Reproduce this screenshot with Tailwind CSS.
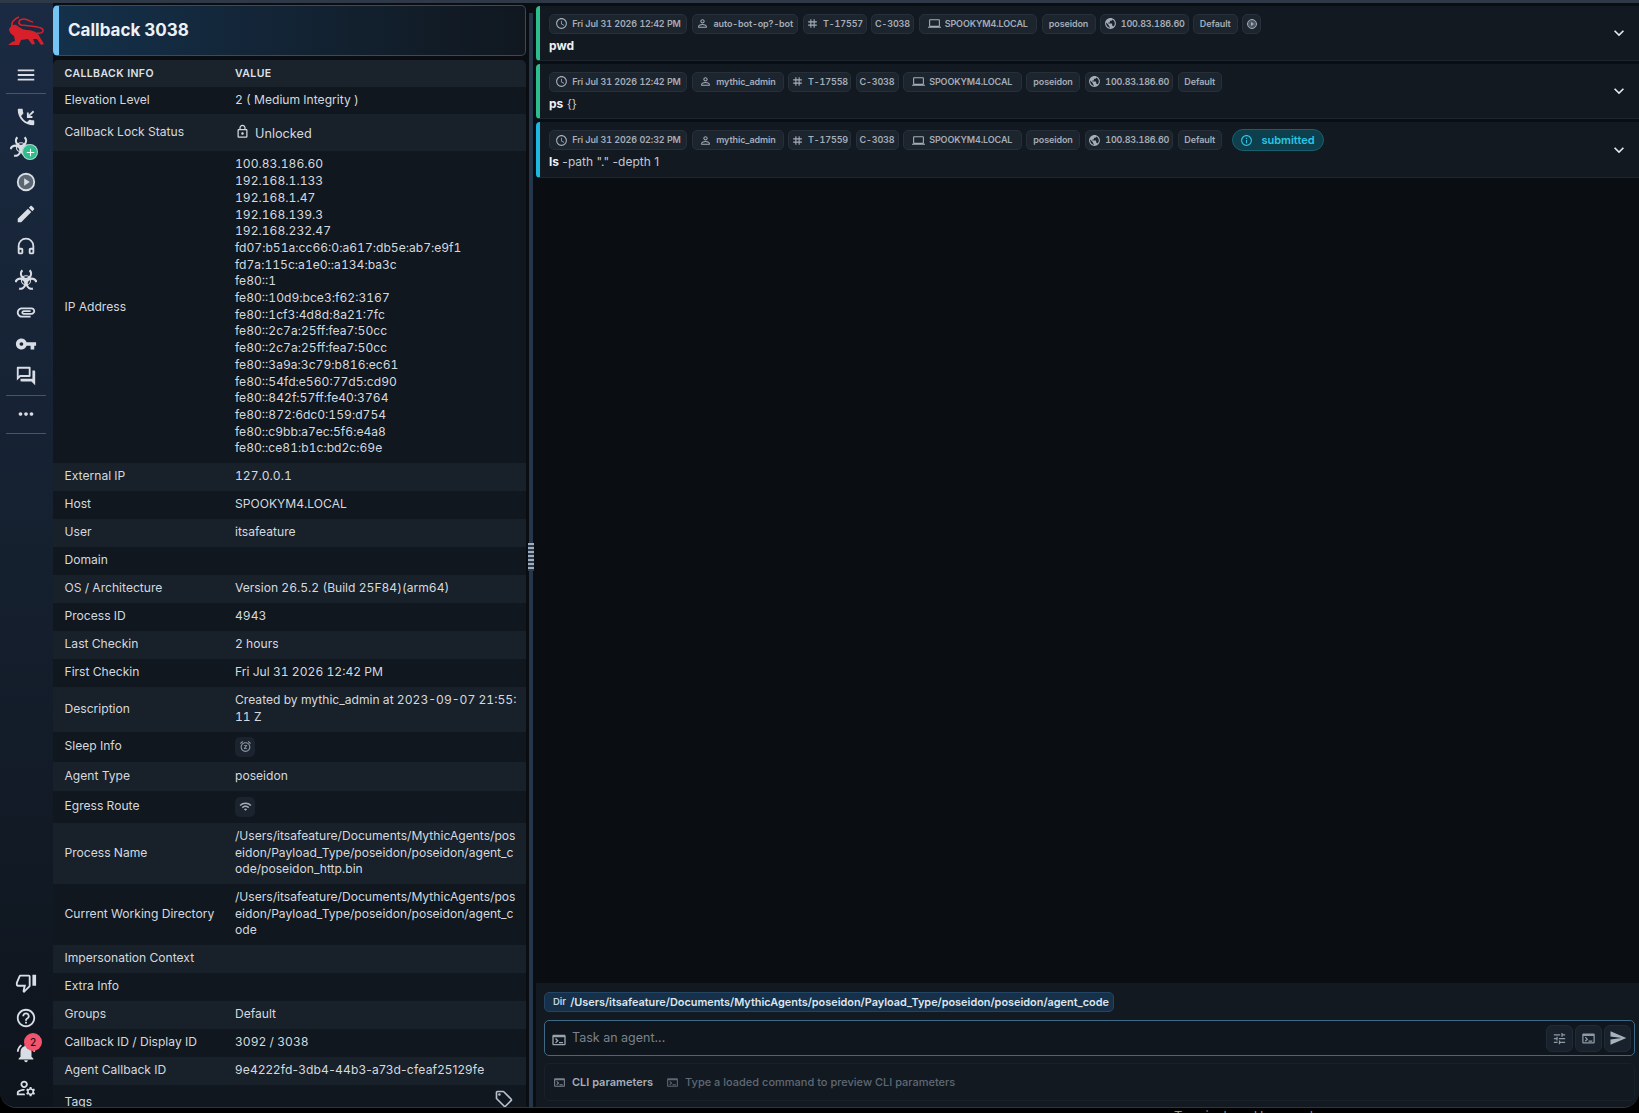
<!DOCTYPE html>
<html lang="en">
<head>
<meta charset="UTF-8">
<title>Callback 3038</title>
<script src="https://cdn.jsdelivr.net/npm/@tailwindcss/browser@4"></script>
</head>
<body class="bg-black">
<svg class="hidden">
  <symbol id="i-clock" viewBox="0 0 24 24"><path d="M11.99 2C6.47 2 2 6.48 2 12s4.47 10 9.99 10C17.52 22 22 17.52 22 12S17.52 2 11.99 2zM12 20c-4.42 0-8-3.58-8-8s3.58-8 8-8 8 3.58 8 8-3.58 8-8 8zm.5-13H11v6l5.25 3.15.75-1.23-4.5-2.67z"/></symbol>
  <symbol id="i-person" viewBox="0 0 24 24"><path d="M12 5.9c1.16 0 2.1.94 2.1 2.1s-.94 2.1-2.1 2.1S9.9 9.16 9.9 8s.94-2.1 2.1-2.1m0 9c2.97 0 6.1 1.46 6.1 2.1v1.1H5.9V17c0-.64 3.13-2.1 6.1-2.1M12 4C9.79 4 8 5.79 8 8s1.79 4 4 4 4-1.79 4-4-1.79-4-4-4zm0 9c-2.67 0-8 1.34-8 4v3h16v-3c0-2.66-5.33-4-8-4z"/></symbol>
  <symbol id="i-tag" viewBox="0 0 24 24"><path d="M20 10V8h-4V4h-2v4h-4V4H8v4H4v2h4v4H4v2h4v4h2v-4h4v4h2v-4h4v-2h-4v-4h4zm-6 4h-4v-4h4v4z"/></symbol>
  <symbol id="i-laptop" viewBox="0 0 24 24"><path d="M20 18c1.1 0 1.99-.9 1.99-2L22 6c0-1.1-.9-2-2-2H4c-1.1 0-2 .9-2 2v10c0 1.1.9 2 2 2H0v2h24v-2h-4zM4 6h16v10H4V6z"/></symbol>
  <symbol id="i-globe" viewBox="0 0 24 24"><path d="M12 2C6.48 2 2 6.48 2 12s4.48 10 10 10 10-4.48 10-10S17.52 2 12 2zm-1 17.93c-3.95-.49-7-3.85-7-7.93 0-.62.08-1.21.21-1.79L9 15v1c0 1.1.9 2 2 2v1.93zm6.9-2.54c-.26-.81-1-1.39-1.9-1.39h-1v-3c0-.55-.45-1-1-1H8v-2h2c.55 0 1-.45 1-1V7h2c1.1 0 2-.9 2-2v-.41c2.93 1.19 5 4.06 5 7.41 0 2.08-.8 3.97-2.1 5.39z"/></symbol>
  <symbol id="i-term" viewBox="0 0 24 24"><path d="M20 4H4c-1.1 0-2 .9-2 2v12c0 1.1.9 2 2 2h16c1.1 0 2-.9 2-2V6c0-1.1-.9-2-2-2zm0 14H4V8h16v10zm-2-1h-6v-2h6v2zM7.5 17l-1.41-1.41L8.67 13l-2.59-2.59L7.5 9l4 4-4 4z"/></symbol>
  <symbol id="i-chev" viewBox="0 0 24 24"><path d="M16.59 8.59 12 13.17 7.41 8.59 6 10l6 6 6-6z"/></symbol>
  <symbol id="i-bio" viewBox="0 0 24 24">
    <g fill="none" stroke="currentColor" stroke-width="2.400">
      <path d="M8 2.500A5.500 5.500 0 1 0 16 2.500"/>
      <path d="M8 2.500A5.500 5.500 0 1 0 16 2.500" transform="rotate(120 12 13.500)"/>
      <path d="M8 2.500A5.500 5.500 0 1 0 16 2.500" transform="rotate(240 12 13.500)"/>
      <circle cx="12" cy="13.500" r="5" stroke-width="1.100"/>
    </g>
    <circle cx="12" cy="13.500" r="1.700" fill="currentColor"/>
  </symbol>
</svg>

<div class="h-[1113px] w-[1639px] overflow-hidden relative" style="font-family:Inter,'Liberation Sans',sans-serif">
  <div class="h-[1108px] flex flex-col bg-[#0a0e13] rounded-b-[16px] border-b border-[#2c343e] overflow-hidden">
    <div class="h-[3px] shrink-0 bg-[#2e3846]"></div>
    <div class="flex-1 flex min-h-0">

      <!-- sidebar -->
      <div class="w-[53px] shrink-0 flex flex-col items-center pr-[1px] bg-gradient-to-b from-[#1a2a42] via-[#15202f] to-[#0e141c] text-[#d9dee5]">
        <svg class="mt-[10px] w-[40px] h-[36px]" viewBox="6 13 40 34" fill="#d8202b">
          <path d="M9 28C11 24 14 23 16 24C20 26 22 29 27 29C31 29 35 30 38 33L41 38L44 43L41 44L37 38L33 38L35 43L32 43.500L28 38L21 39L19 44L8 44L12 41L15 40L14 35C11 33 9 31 9 28Z"/>
          <path d="M37 32C43 33 45 29 41 27C36 25 28 25 21 24C17 22 19 18 24 18C28 18 30 21 33 21" fill="none" stroke="#d8202b" stroke-width="1.600"/>
          <path d="M12 26C11 21 14 18 19 16" fill="none" stroke="#d8202b" stroke-width="1.600"/>
        </svg>
        <svg class="mt-[15px] w-[22px] h-[22px]" viewBox="0 0 24 24" fill="currentColor"><path d="M3 18h18v-2H3v2zm0-5h18v-2H3v2zm0-7v2h18V6H3z"/></svg>
        <div class="mt-[7px] w-[40px] h-px bg-[#4a5563]"></div>
        <div class="mt-[7px] flex flex-col items-center w-full">
          <div class="h-[32.4px] flex items-center"><svg class="w-[22px] h-[22px]" viewBox="0 0 24 24" fill="currentColor"><path d="M20 15.500c-1.250 0-2.450-.2-3.570-.57-.35-.11-.74-.03-1.020.24l-2.200 2.200c-2.830-1.440-5.150-3.750-6.590-6.580l2.200-2.210c.28-.27.36-.66.25-1.010C8.700 6.450 8.500 5.250 8.500 4c0-.55-.45-1-1-1H4c-.55 0-1 .45-1 1 0 9.390 7.610 17 17 17 .55 0 1-.45 1-1v-3.500c0-.55-.45-1-1-1zM21 6.410 19.590 5 15 9.590V7h-2v6h6v-2h-2.590z"/></svg></div>
          <div class="h-[32.4px] flex items-center relative -ml-[10px]">
            <svg class="w-[22px] h-[22px] -mt-[7px]"><use href="#i-bio"/></svg>
            <div class="absolute left-[12px] top-[11px] w-[16px] h-[16px] rounded-full bg-[#2ebd8c] border border-[#e4e8ee]/70 flex items-center justify-center"><svg class="w-[13px] h-[13px]" viewBox="0 0 24 24" fill="#fff"><path d="M19 13h-6v6h-2v-6H5v-2h6V5h2v6h6v2z"/></svg></div>
          </div>
          <div class="h-[32.4px] flex items-center"><svg class="w-[22px] h-[22px]" viewBox="0 0 24 24"><circle cx="12" cy="12" r="9" fill="#5d6673" stroke="#d9dee5" stroke-width="2"/><path d="M10 8l6 4-6 4z" fill="#d9dee5"/></svg></div>
          <div class="h-[32.4px] flex items-center"><svg class="w-[22px] h-[22px]" viewBox="0 0 24 24" fill="currentColor"><path d="M3 17.250V21h3.750L17.810 9.940l-3.750-3.750L3 17.250zM20.710 7.040c.39-.39.39-1.020 0-1.410l-2.340-2.340c-.39-.39-1.020-.39-1.410 0l-1.830 1.830 3.750 3.750 1.830-1.830z"/></svg></div>
          <div class="h-[32.4px] flex items-center"><svg class="w-[22px] h-[22px] -mt-[2px]" viewBox="0 0 24 24" fill="currentColor"><path d="M12 3a9 9 0 0 0-9 9v7c0 1.100.9 2 2 2h2c1.100 0 2-.9 2-2v-3c0-1.100-.9-2-2-2H5v-2c0-3.870 3.130-7 7-7s7 3.130 7 7v2h-2c-1.100 0-2 .9-2 2v3c0 1.100.9 2 2 2h2c1.100 0 2-.9 2-2v-7a9 9 0 0 0-9-9zM7 16v3H5v-3h2zm12 3h-2v-3h2v3z"/></svg></div>
          <div class="h-[32.4px] flex items-center"><svg class="w-[22px] h-[22px]"><use href="#i-bio"/></svg></div>
          <div class="h-[32.4px] flex items-center"><svg class="w-[22px] h-[22px]" viewBox="0 0 24 24" fill="currentColor"><path d="M2 12.500C2 9.460 4.460 7 7.500 7H18c2.210 0 4 1.790 4 4s-1.790 4-4 4H9.500C8.120 15 7 13.880 7 12.500S8.120 10 9.500 10H17v2H9.410c-.55 0-.55 1 0 1H18c1.100 0 2-.9 2-2s-.9-2-2-2H7.500C5.570 9 4 10.570 4 12.500S5.570 16 7.500 16H17v2H7.500C4.460 18 2 15.540 2 12.500z"/></svg></div>
          <div class="h-[32.4px] flex items-center"><svg class="w-[22px] h-[22px]" viewBox="0 0 24 24" fill="currentColor"><path d="M12.650 10C11.830 7.670 9.610 6 7 6c-3.310 0-6 2.690-6 6s2.690 6 6 6c2.610 0 4.830-1.670 5.650-4H17v4h4v-4h2v-4H12.650zM7 14c-1.100 0-2-.9-2-2s.9-2 2-2 2 .9 2 2-.9 2-2 2z"/></svg></div>
          <div class="h-[32.4px] flex items-center"><svg class="w-[22px] h-[22px]" viewBox="0 0 24 24" fill="currentColor"><path d="M15 4v7H5.170L4 12.170V4h11m1-2H3c-.55 0-1 .45-1 1v14l4-4h10c.55 0 1-.45 1-1V3c0-.55-.45-1-1-1zm5 4h-2v9H6v2c0 .55.45 1 1 1h11l4 4V7c0-.55-.45-1-1-1z"/></svg></div>
        </div>
        <div class="mt-[2px] w-[40px] h-px bg-[#4a5563]"></div>
        <svg class="mt-[7px] w-[22px] h-[22px]" viewBox="0 0 24 24" fill="currentColor"><path d="M6 10c-1.100 0-2 .9-2 2s.9 2 2 2 2-.9 2-2-.9-2-2-2zm12 0c-1.100 0-2 .9-2 2s.9 2 2 2 2-.9 2-2-.9-2-2-2zm-6 0c-1.100 0-2 .9-2 2s.9 2 2 2 2-.9 2-2-.9-2-2-2z"/></svg>
        <div class="mt-[8px] w-[40px] h-px bg-[#4a5563]"></div>
        <div class="mt-auto mb-[8px] flex flex-col items-center gap-[13px]">
          <svg class="w-[22px] h-[22px]" viewBox="0 0 24 24" fill="currentColor"><path d="M15 3H6c-.83 0-1.540.5-1.840 1.220l-3.020 7.050c-.09.23-.14.47-.14.73v2c0 1.100.9 2 2 2h6.310l-.95 4.570-.03.32c0 .41.17.79.44 1.060L9.830 23l6.590-6.590c.36-.36.58-.86.58-1.410V5c0-1.100-.9-2-2-2zm0 12-4.340 4.340L12 14H3v-2l3-7h9v10zm4-12h4v12h-4z"/></svg>
          <svg class="w-[22px] h-[22px]" viewBox="0 0 24 24" fill="currentColor"><path d="M11 18h2v-2h-2v2zm1-16C6.480 2 2 6.480 2 12s4.480 10 10 10 10-4.480 10-10S17.520 2 12 2zm0 18c-4.410 0-8-3.590-8-8s3.590-8 8-8 8 3.590 8 8-3.590 8-8 8zm0-14c-2.210 0-4 1.790-4 4h2c0-1.100.9-2 2-2s2 .9 2 2c0 2-3 1.750-3 5h2c0-2.250 3-2.500 3-5 0-2.210-1.790-4-4-4z"/></svg>
          <div class="relative">
            <svg class="w-[22px] h-[22px]" viewBox="0 0 24 24" fill="currentColor"><path d="M7.580 4.080 6.150 2.650C3.750 4.480 2.170 7.300 2.030 10.500h2c.15-2.650 1.510-4.970 3.550-6.420zm12.390 6.420h2c-.15-3.200-1.730-6.020-4.120-7.850l-1.420 1.430c2.020 1.450 3.390 3.770 3.540 6.420zM18 11c0-3.070-1.640-5.640-4.500-6.320V4c0-.83-.67-1.500-1.500-1.500s-1.500.67-1.500 1.500v.68C7.630 5.360 6 7.920 6 11v5l-2 2v1h16v-1l-2-2v-5zm-6 11c.14 0 .27-.01.4-.04.65-.14 1.180-.58 1.440-1.180.1-.24.15-.5.15-.78h-4c.01 1.100.9 2 2.010 2z"/></svg>
            <div class="absolute left-[9px] -top-[9px] w-[18px] h-[18px] rounded-full bg-[#f2546e] flex items-center justify-center text-[10px] font-medium text-[#1a1014]">2</div>
          </div>
          <svg class="w-[22px] h-[22px]" viewBox="0 0 24 24" fill="currentColor"><path d="M4 18v-.65c0-.34.16-.66.41-.81C6.100 15.530 8.030 15 10 15c.03 0 .05 0 .08.01.1-.7.3-1.370.59-1.980-.22-.02-.44-.03-.67-.03-2.420 0-4.680.67-6.610 1.820-.88.52-1.390 1.500-1.390 2.530V20h9.260c-.42-.6-.75-1.280-.97-2H4z"/><path d="M10 12c2.210 0 4-1.790 4-4s-1.790-4-4-4-4 1.790-4 4 1.790 4 4 4zm0-6c1.100 0 2 .9 2 2s-.9 2-2 2-2-.9-2-2 .9-2 2-2z"/><path d="M20.750 16c0-.22-.03-.42-.06-.63l1.140-1.010-1-1.730-1.450.49c-.32-.27-.68-.48-1.080-.63L18 11h-2l-.3 1.490c-.4.15-.76.36-1.080.63l-1.450-.49-1 1.730 1.140 1.010c-.03.21-.06.41-.06.63s.03.42.06.63l-1.140 1.010 1 1.730 1.450-.49c.32.27.68.48 1.080.63L16 21h2l.3-1.490c.4-.15.76-.36 1.080-.63l1.450.49 1-1.730-1.140-1.010c.03-.21.06-.41.06-.63zM17 18c-1.100 0-2-.9-2-2s.9-2 2-2 2 .9 2 2-.9 2-2 2z"/></svg>
        </div>
      </div>

      <!-- callback info -->
      <div class="w-[473px] shrink-0 flex flex-col pt-[2px] min-h-0 overflow-hidden">
        <div class="h-[51px] shrink-0 flex items-center rounded-[5px] border border-[#2f4d63] border-l-[6px] border-l-[#74c4f5] bg-gradient-to-r from-[#14304a] to-[#10171f] pl-[9px] text-[17px] font-bold text-[#eef1f4]">Callback 3038</div>
        <div class="mt-[4px] flex-1 min-h-0 overflow-hidden rounded-t-[5px] text-[12.1px] tabular-nums text-[#d5d9df]">
          <div class="h-[27px] flex items-center bg-[#1a222c] pl-[11.5px] text-[10.5px] font-semibold tracking-[0.4px] text-[#dfe3e8]"><div class="w-[170.5px]">CALLBACK INFO</div><div>VALUE</div></div>
          <div class="h-[27px] flex items-center bg-[#10171f] pl-[11.5px]"><div class="w-[170.5px]">Elevation Level</div><div>2 ( Medium Integrity )</div></div>
          <div class="h-[37px] flex items-center bg-[#18202a] pl-[11.5px]"><div class="w-[170.5px]">Callback Lock Status</div><div class="flex items-center gap-[5px]"><svg class="w-[15px] h-[15px] -mt-[2px]" viewBox="0 0 24 24" fill="currentColor"><path d="M18 8h-1V6c0-2.760-2.240-5-5-5S7 3.240 7 6v2H6c-1.100 0-2 .9-2 2v10c0 1.100.9 2 2 2h12c1.100 0 2-.9 2-2V10c0-1.100-.9-2-2-2zM9 6c0-1.660 1.340-3 3-3s3 1.340 3 3v2H9V6zm9 14H6V10h12v10zm-6-3c1.100 0 2-.9 2-2s-.9-2-2-2-2 .9-2 2 .9 2 2 2z"/></svg><span class="mt-[3px] text-[12.7px]">Unlocked</span></div></div>
          <div class="h-[311.5px] flex items-center bg-[#10171f] pl-[11.5px]"><div class="w-[170.5px]">IP Address</div><div class="leading-[16.7px]">100.83.186.60<br>192.168.1.133<br>192.168.1.47<br>192.168.139.3<br>192.168.232.47<br>fd07:b51a:cc66:0:a617:db5e:ab7:e9f1<br>fd7a:115c:a1e0::a134:ba3c<br>fe80::1<br>fe80::10d9:bce3:f62:3167<br>fe80::1cf3:4d8d:8a21:7fc<br>fe80::2c7a:25ff:fea7:50cc<br>fe80::2c7a:25ff:fea7:50cc<br>fe80::3a9a:3c79:b816:ec61<br>fe80::54fd:e560:77d5:cd90<br>fe80::842f:57ff:fe40:3764<br>fe80::872:6dc0:159:d754<br>fe80::c9bb:a7ec:5f6:e4a8<br>fe80::ce81:b1c:bd2c:69e</div></div>
          <div class="h-[28px] flex items-center bg-[#18202a] pl-[11.5px]"><div class="w-[170.5px]">External IP</div><div>127.0.0.1</div></div>
          <div class="h-[28px] flex items-center bg-[#10171f] pl-[11.5px]"><div class="w-[170.5px]">Host</div><div>SPOOKYM4.LOCAL</div></div>
          <div class="h-[28px] flex items-center bg-[#18202a] pl-[11.5px]"><div class="w-[170.5px]">User</div><div>itsafeature</div></div>
          <div class="h-[28px] flex items-center bg-[#10171f] pl-[11.5px]"><div class="w-[170.5px]">Domain</div></div>
          <div class="h-[28px] flex items-center bg-[#18202a] pl-[11.5px]"><div class="w-[170.5px]">OS / Architecture</div><div>Version 26.5.2 (Build 25F84)(arm64)</div></div>
          <div class="h-[28px] flex items-center bg-[#10171f] pl-[11.5px]"><div class="w-[170.5px]">Process ID</div><div>4943</div></div>
          <div class="h-[28px] flex items-center bg-[#18202a] pl-[11.5px]"><div class="w-[170.5px]">Last Checkin</div><div>2 hours</div></div>
          <div class="h-[28px] flex items-center bg-[#10171f] pl-[11.5px]"><div class="w-[170.5px]">First Checkin</div><div>Fri Jul 31 2026 12:42 PM</div></div>
          <div class="h-[45px] flex items-center bg-[#18202a] pl-[11.5px]"><div class="w-[170.5px]">Description</div><div class="w-[284px] break-all leading-[16.7px]">Created by mythic_admin at 2023-09-07 21:55:11 Z</div></div>
          <div class="h-[30px] flex items-center bg-[#10171f] pl-[11.5px]"><div class="w-[170.5px]">Sleep Info</div><div class="w-[20px] h-[20px] rounded-[5px] bg-[#1a232e] flex items-center justify-center"><svg class="w-[13px] h-[13px]" viewBox="0 0 24 24" fill="#8a96a3"><path d="M22 5.720l-4.600-3.860-1.290 1.530 4.600 3.860L22 5.720zM7.880 3.390L6.600 1.860 2 5.710l1.290 1.530 4.590-3.850zM12 4c-4.970 0-9 4.030-9 9s4.030 9 9 9 9-4.030 9-9-4.030-9-9-9zm0 16c-3.870 0-7-3.130-7-7s3.130-7 7-7 7 3.130 7 7-3.130 7-7 7zM9 9h6v1.500L11.500 15H15v1.500H9V15l3.500-4.500H9z"/></svg></div></div>
          <div class="h-[29px] flex items-center bg-[#18202a] pl-[11.5px]"><div class="w-[170.5px]">Agent Type</div><div>poseidon</div></div>
          <div class="h-[32px] flex items-center bg-[#10171f] pl-[11.5px]"><div class="w-[170.5px]">Egress Route</div><div class="w-[20px] h-[20px] rounded-[5px] bg-[#1a232e] flex items-center justify-center"><svg class="w-[13px] h-[13px]" viewBox="0 0 24 24" fill="#a4afba"><path d="M1 9l2 2c4.970-4.970 13.030-4.970 18 0l2-2C16.930 2.930 7.080 2.930 1 9zm8 8l3 3 3-3c-1.650-1.660-4.340-1.660-6 0zm-4-4l2 2c2.760-2.760 7.240-2.760 10 0l2-2C15.140 9.140 8.870 9.140 5 13z"/></svg></div></div>
          <div class="h-[61px] flex items-center bg-[#18202a] pl-[11.5px]"><div class="w-[170.5px]">Process Name</div><div class="w-[284px] break-all leading-[16.7px]">/Users/itsafeature/Documents/MythicAgents/poseidon/Payload_Type/poseidon/poseidon/agent_code/poseidon_http.bin</div></div>
          <div class="h-[61px] flex items-center bg-[#10171f] pl-[11.5px]"><div class="w-[170.5px]">Current Working Directory</div><div class="w-[284px] break-all leading-[16.7px]">/Users/itsafeature/Documents/MythicAgents/poseidon/Payload_Type/poseidon/poseidon/agent_code</div></div>
          <div class="h-[28px] flex items-center bg-[#18202a] pl-[11.5px]"><div class="w-[170.5px]">Impersonation Context</div></div>
          <div class="h-[28px] flex items-center bg-[#10171f] pl-[11.5px]"><div class="w-[170.5px]">Extra Info</div></div>
          <div class="h-[28px] flex items-center bg-[#18202a] pl-[11.5px]"><div class="w-[170.5px]">Groups</div><div>Default</div></div>
          <div class="h-[28px] flex items-center bg-[#10171f] pl-[11.5px]"><div class="w-[170.5px]">Callback ID / Display ID</div><div>3092 / 3038</div></div>
          <div class="h-[28px] flex items-center bg-[#18202a] pl-[11.5px]"><div class="w-[170.5px]">Agent Callback ID</div><div class="[font-variant-numeric:normal] tracking-[0.2px]">9e4222fd-3db4-44b3-a73d-cfeaf25129fe</div></div>
          <div class="h-[32px] flex items-center justify-between bg-[#10171f] pl-[11.5px] pr-[12px] pt-[3px]"><div>Tags</div><svg class="w-[20px] h-[20px] -mt-[6px]" viewBox="0 0 24 24" fill="#b9c0c9"><path d="m21.410 11.580-9-9C12.050 2.220 11.550 2 11 2H4c-1.100 0-2 .9-2 2v7c0 .55.22 1.050.59 1.420l9 9c.36.36.86.58 1.410.58s1.050-.22 1.410-.59l7-7c.37-.36.59-.86.59-1.410s-.23-1.060-.59-1.420zM13 20.010 4 11V4h7v-.01l9 9-7 7.020z"/><circle cx="6.500" cy="6.500" r="1.500"/></svg></div>
        </div>
      </div>

      <!-- splitter -->
      <div class="w-[10px] shrink-0 pl-[3px]">
        <div class="w-[4px] h-full mt-[10px] bg-[#26364a] relative">
          <div class="absolute -left-[1px] top-[530px] w-[6px] h-[28px] bg-[repeating-linear-gradient(to_bottom,#a3aebb_0,#a3aebb_2px,#2b3a4c_2px,#2b3a4c_4px)]"></div>
        </div>
      </div>

      <!-- tasks -->
      <div class="flex-1 min-w-0 flex flex-col">
        <div class="flex-1 flex flex-col pt-[3px] gap-[3px]">
          <div class="h-[55px] flex items-center rounded-l-[4px] border-l-[4px] border-l-[#2ebd8c] border-b border-[#1d252e] bg-[#121921] pl-[9px] pr-[9px]">
            <div class="flex-1 min-w-0">
              <div class="flex items-center gap-[4.500px] mt-[1px] text-[9px] tracking-[-0.1px] font-semibold tabular-nums text-[#a5adb8]">
                <div class="flex items-center gap-[4px] h-[20px] w-[138px] justify-center rounded-[5px] bg-[#1c242e] border border-[#262f3a]"><svg class="w-[13px] h-[13px]" fill="currentColor"><use href="#i-clock"/></svg>Fri Jul 31 2026 12:42 PM</div>
                <div class="flex items-center gap-[4px] h-[20px] w-[106.500px] justify-center rounded-[5px] bg-[#1c242e] border border-[#262f3a]"><svg class="w-[13px] h-[13px]" fill="currentColor"><use href="#i-person"/></svg>auto-bot-op?-bot</div>
                <div class="flex items-center gap-[4px] h-[20px] w-[64px] justify-center rounded-[5px] bg-[#1c242e] border border-[#262f3a]"><svg class="w-[13px] h-[13px]" fill="currentColor"><use href="#i-tag"/></svg>T-17557</div>
                <div class="flex items-center h-[20px] w-[43px] justify-center rounded-[5px] bg-[#1c242e] border border-[#262f3a]">C-3038</div>
                <div class="flex items-center gap-[4px] h-[20px] w-[118.500px] justify-center rounded-[5px] bg-[#1c242e] border border-[#262f3a]"><svg class="w-[13px] h-[13px]" fill="currentColor"><use href="#i-laptop"/></svg>SPOOKYM4.LOCAL</div>
                <div class="flex items-center h-[20px] w-[54px] justify-center rounded-[5px] bg-[#1c242e] border border-[#262f3a]">poseidon</div>
                <div class="flex items-center gap-[4px] h-[20px] w-[88.500px] justify-center rounded-[5px] bg-[#1c242e] border border-[#262f3a]"><svg class="w-[13px] h-[13px]" fill="currentColor"><use href="#i-globe"/></svg>100.83.186.60</div>
                <div class="flex items-center h-[20px] w-[44.500px] justify-center rounded-[5px] bg-[#1c242e] border border-[#262f3a]">Default</div>
                <div class="flex items-center h-[20px] w-[19px] justify-center rounded-[5px] bg-[#1c242e] border border-[#262f3a]"><svg class="w-[12px] h-[12px]" viewBox="0 0 24 24"><circle cx="12" cy="12" r="9" fill="#4d5663" stroke="#a5adb8" stroke-width="2"/><path d="M10 8l6 4-6 4z" fill="#a5adb8"/></svg></div>
              </div>
              <div class="mt-[4px] text-[12px] leading-[16px] text-[#eef1f4]"><b class="font-bold">pwd</b></div>
            </div>
            <svg class="w-[20px] h-[20px] text-[#e6e9ed] mr-[1px]" fill="currentColor"><use href="#i-chev"/></svg>
          </div>
          <div class="h-[55px] flex items-center rounded-l-[4px] border-l-[4px] border-l-[#2ebd8c] border-b border-[#1d252e] bg-[#121921] pl-[9px] pr-[9px]">
            <div class="flex-1 min-w-0">
              <div class="flex items-center gap-[4.500px] mt-[1px] text-[9px] tracking-[-0.1px] font-semibold tabular-nums text-[#a5adb8]">
                <div class="flex items-center gap-[4px] h-[20px] w-[138px] justify-center rounded-[5px] bg-[#1c242e] border border-[#262f3a]"><svg class="w-[13px] h-[13px]" fill="currentColor"><use href="#i-clock"/></svg>Fri Jul 31 2026 12:42 PM</div>
                <div class="flex items-center gap-[4px] h-[20px] w-[92px] justify-center rounded-[5px] bg-[#1c242e] border border-[#262f3a]"><svg class="w-[13px] h-[13px]" fill="currentColor"><use href="#i-person"/></svg>mythic_admin</div>
                <div class="flex items-center gap-[4px] h-[20px] w-[63px] justify-center rounded-[5px] bg-[#1c242e] border border-[#262f3a]"><svg class="w-[13px] h-[13px]" fill="currentColor"><use href="#i-tag"/></svg>T-17558</div>
                <div class="flex items-center h-[20px] w-[43px] justify-center rounded-[5px] bg-[#1c242e] border border-[#262f3a]">C-3038</div>
                <div class="flex items-center gap-[4px] h-[20px] w-[118.500px] justify-center rounded-[5px] bg-[#1c242e] border border-[#262f3a]"><svg class="w-[13px] h-[13px]" fill="currentColor"><use href="#i-laptop"/></svg>SPOOKYM4.LOCAL</div>
                <div class="flex items-center h-[20px] w-[54px] justify-center rounded-[5px] bg-[#1c242e] border border-[#262f3a]">poseidon</div>
                <div class="flex items-center gap-[4px] h-[20px] w-[88.500px] justify-center rounded-[5px] bg-[#1c242e] border border-[#262f3a]"><svg class="w-[13px] h-[13px]" fill="currentColor"><use href="#i-globe"/></svg>100.83.186.60</div>
                <div class="flex items-center h-[20px] w-[44.500px] justify-center rounded-[5px] bg-[#1c242e] border border-[#262f3a]">Default</div>
              </div>
              <div class="mt-[4px] text-[12px] leading-[16px] text-[#c3c9d1]"><b class="font-bold text-[#eef1f4]">ps</b> {}</div>
            </div>
            <svg class="w-[20px] h-[20px] text-[#e6e9ed] mr-[1px]" fill="currentColor"><use href="#i-chev"/></svg>
          </div>
          <div class="h-[56px] flex items-center rounded-l-[4px] border-l-[4px] border-l-[#1cb8e0] border-b border-[#1d252e] bg-[#121921] pl-[9px] pr-[9px]">
            <div class="flex-1 min-w-0">
              <div class="flex items-center gap-[4.500px] text-[9px] tracking-[-0.1px] font-semibold tabular-nums text-[#a5adb8]">
                <div class="flex items-center gap-[4px] h-[20px] w-[138px] justify-center rounded-[5px] bg-[#1c242e] border border-[#262f3a]"><svg class="w-[13px] h-[13px]" fill="currentColor"><use href="#i-clock"/></svg>Fri Jul 31 2026 02:32 PM</div>
                <div class="flex items-center gap-[4px] h-[20px] w-[92px] justify-center rounded-[5px] bg-[#1c242e] border border-[#262f3a]"><svg class="w-[13px] h-[13px]" fill="currentColor"><use href="#i-person"/></svg>mythic_admin</div>
                <div class="flex items-center gap-[4px] h-[20px] w-[63px] justify-center rounded-[5px] bg-[#1c242e] border border-[#262f3a]"><svg class="w-[13px] h-[13px]" fill="currentColor"><use href="#i-tag"/></svg>T-17559</div>
                <div class="flex items-center h-[20px] w-[43px] justify-center rounded-[5px] bg-[#1c242e] border border-[#262f3a]">C-3038</div>
                <div class="flex items-center gap-[4px] h-[20px] w-[118.500px] justify-center rounded-[5px] bg-[#1c242e] border border-[#262f3a]"><svg class="w-[13px] h-[13px]" fill="currentColor"><use href="#i-laptop"/></svg>SPOOKYM4.LOCAL</div>
                <div class="flex items-center h-[20px] w-[54px] justify-center rounded-[5px] bg-[#1c242e] border border-[#262f3a]">poseidon</div>
                <div class="flex items-center gap-[4px] h-[20px] w-[88.500px] justify-center rounded-[5px] bg-[#1c242e] border border-[#262f3a]"><svg class="w-[13px] h-[13px]" fill="currentColor"><use href="#i-globe"/></svg>100.83.186.60</div>
                <div class="flex items-center h-[20px] w-[44.500px] justify-center rounded-[5px] bg-[#1c242e] border border-[#262f3a]">Default</div>
                <div class="ml-[5px] flex items-center gap-[8px] h-[22px] w-[92px] justify-center rounded-full bg-[#0e3f4c] border border-[#17606f] text-[11px] tracking-normal font-semibold text-[#2bc6e6]"><svg class="w-[13px] h-[13px]" viewBox="0 0 24 24" fill="currentColor"><path d="M11 7h2v2h-2zm0 4h2v6h-2zm1-9C6.480 2 2 6.480 2 12s4.480 10 10 10 10-4.480 10-10S17.520 2 12 2zm0 18c-4.410 0-8-3.590-8-8s3.590-8 8-8 8 3.590 8 8-3.590 8-8 8z"/></svg>submitted</div>
              </div>
              <div class="mt-[3px] text-[12px] leading-[16px] text-[#c3c9d1]"><b class="font-bold text-[#eef1f4]">ls</b> -path "." -depth 1</div>
            </div>
            <svg class="w-[20px] h-[20px] text-[#e6e9ed] mr-[1px]" fill="currentColor"><use href="#i-chev"/></svg>
          </div>
        </div>

        <!-- input -->
        <div class="h-[124px] shrink-0 bg-[#121921] pl-[8px] pr-[4px] pt-[9px]">
          <div class="h-[20px] w-[570px] flex items-center gap-[4px] rounded-[5px] bg-[#16304a] border border-[#234563] pl-[8px] text-[10.9px] font-semibold text-[#dde6ee]"><span class="text-[#c5d3df] text-[9.500px]">Dir</span><span>/Users/itsafeature/Documents/MythicAgents/poseidon/Payload_Type/poseidon/poseidon/agent_code</span></div>
          <div class="mt-[8px] h-[36px] flex items-center rounded-[5px] border border-[#3f6a87] bg-[#0f161d] pl-[6px] pr-[3px]">
            <svg class="w-[16px] h-[16px] text-[#9aa4af] mt-[3px]" fill="currentColor"><use href="#i-term"/></svg>
            <div class="flex-1 ml-[5px] text-[12.500px] text-[#7a838e]">Task an agent...</div>
            <div class="flex gap-[2px]">
              <div class="w-[27px] h-[27px] rounded-[6px] bg-[#19222c] border border-[#212b36] flex items-center justify-center"><svg class="w-[15px] h-[15px]" viewBox="0 0 24 24" fill="#8f9aa6"><path d="M3 17v2h6v-2H3zM3 5v2h10V5H3zm10 16v-2h8v-2h-8v-2h-2v6h2zM7 9v2H3v2h4v2h2V9H7zm14 4v-2H11v2h10zm-6-4h2V7h4V5h-4V3h-2v6z"/></svg></div>
              <div class="w-[27px] h-[27px] rounded-[6px] bg-[#19222c] border border-[#212b36] flex items-center justify-center"><svg class="w-[15px] h-[15px] text-[#8f9aa6]" fill="currentColor"><use href="#i-term"/></svg></div>
              <div class="w-[27px] h-[27px] rounded-[6px] bg-[#19222c] border border-[#212b36] flex items-center justify-center"><svg class="w-[18px] h-[18px]" viewBox="0 0 24 24" fill="#a8b2bd"><path d="M2.010 21 23 12 2.010 3 2 10l15 2-15 2z"/></svg></div>
            </div>
          </div>
          <div class="mt-[7px] h-[38px] flex items-center rounded-[5px] border border-[#18202a] bg-[#121921] pl-[8px] text-[11px] font-medium">
            <svg class="w-[13px] h-[13px] text-[#79838e]" fill="currentColor"><use href="#i-term"/></svg>
            <span class="ml-[6px] font-semibold text-[#a6aeb8]">CLI parameters</span>
            <svg class="ml-[13px] w-[13px] h-[13px] text-[#5d6771]" fill="currentColor"><use href="#i-term"/></svg>
            <span class="ml-[6px] text-[#5f6975]">Type a loaded command to preview CLI parameters</span>
          </div>
        </div>
      </div>
    </div>
  </div>
  <div class="h-[5px] overflow-hidden flex text-[13px] leading-[16px] text-[#8a929c]">
    <span class="ml-[1174px]">Terminal</span>
    <span class="ml-[27px]">Unnamed</span>
  </div>
</div>
</body>
</html>
